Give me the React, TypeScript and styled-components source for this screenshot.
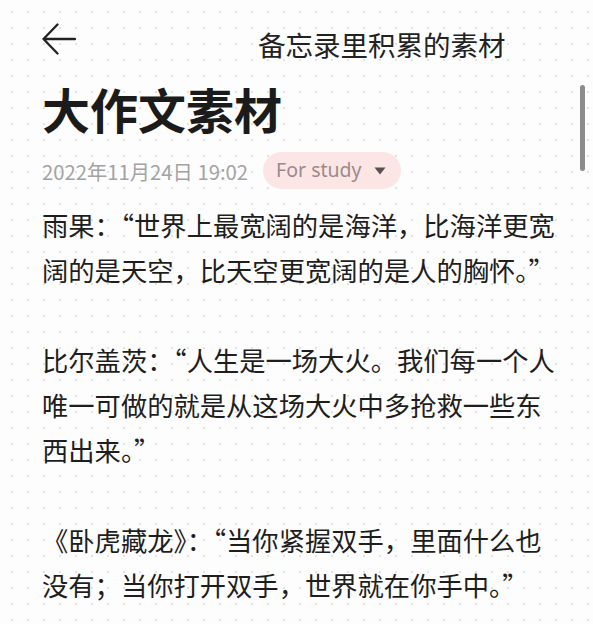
import styled, { createGlobalStyle } from 'styled-components';

const GlobalStyle = createGlobalStyle`
  html, body {
    margin: 0;
    padding: 0;
    overflow: hidden;
  }
  body {
    font-family: "Noto Sans CJK SC", "Noto Sans", sans-serif;
    background: #fdfdfd;
  }
`;

const quotes = [
  '雨果：“世界上最宽阔的是海洋，比海洋更宽阔的是天空，比天空更宽阔的是人的胸怀。”',
  '比尔盖茨：“人生是一场大火。我们每一个人唯一可做的就是从这场大火中多抢救一些东西出来。”',
  '《卧虎藏龙》：“当你紧握双手，里面什么也没有；当你打开双手，世界就在你手中。”',
];

const BackIcon = () => (
  <svg width="34" height="32" viewBox="0 0 34 32" fill="none">
    <path
      d="M1.5 16H33M15.5 1.5L1.5 16L15.5 30.5"
      stroke="#222"
      strokeWidth="2.3"
      strokeLinecap="round"
      strokeLinejoin="round"
    />
  </svg>
);

const Caret = () => (
  <svg width="12" height="8" viewBox="0 0 12 8">
    <path d="M0.5 0.5H11.5L6 7.5Z" fill="#5b4f50" />
  </svg>
);

export default function App() {
  return (
    <>
      <GlobalStyle />
      <Page>
        <Header>
          <BackButton>
            <BackIcon />
          </BackButton>
          <HeaderTitle>备忘录里积累的素材</HeaderTitle>
        </Header>

        <Title>大作文素材</Title>

        <MetaRow>
          <DateText>2022年11月24日 19:02</DateText>
          <Tag>
            <span>For study</span>
            <Caret />
          </Tag>
        </MetaRow>

        <Body>
          {quotes.map((q, i) => (
            <Paragraph key={i}>{q}</Paragraph>
          ))}
        </Body>

        <ScrollThumb />
      </Page>
    </>
  );
}

const Page = styled.div`
  position: relative;
  width: 593px;
  height: 624px;
  box-sizing: border-box;
  padding: 22px 33px 0 42px;
  background-color: #fdfdfd;
  background-image: radial-gradient(circle, #e2e2e2 1px, transparent 1.5px);
  background-size: 16px 16px;
  background-position: 4px 4px;
  overflow: hidden;
`;

const Header = styled.div`
  display: flex;
  align-items: center;
  height: 34px;
`;

const BackButton = styled.div`
  display: flex;
  width: 34px;
  height: 32px;
  cursor: pointer;
`;

const HeaderTitle = styled.div`
  margin-left: 182px;
  margin-top: 10px;
  font-size: 27.5px;
  line-height: 34px;
  color: #222;
  white-space: nowrap;
`;

const Title = styled.h1`
  margin: 28px 0 0;
  font-size: 48px;
  line-height: 48px;
  font-weight: 700;
  color: #1b1b1b;
`;

const MetaRow = styled.div`
  display: flex;
  align-items: center;
  gap: 15px;
  margin-top: 20px;
  height: 37px;
`;

const DateText = styled.span`
  font-size: 20.3px;
  color: #a3a3a3;
  white-space: nowrap;
`;

const Tag = styled.div`
  display: flex;
  align-items: center;
  gap: 12px;
  height: 37px;
  padding: 0 15px 0 13px;
  border-radius: 19px;
  background: #fce5e5;
  color: #9a8a8b;
  font-family: "Noto Sans", "Noto Sans CJK SC", sans-serif;
  font-size: 19.5px;

  span {
    line-height: 1;
    margin-top: -1px;
  }
`;

const Body = styled.div`
  margin-top: 13px;
  display: flex;
  flex-direction: column;
  gap: 45px;
`;

const Paragraph = styled.p`
  margin: 0;
  font-size: 26.3px;
  line-height: 45px;
  color: #1e1e1e;
`;

const ScrollThumb = styled.div`
  position: absolute;
  top: 85px;
  left: 580px;
  width: 5px;
  height: 86px;
  border-radius: 3px;
  background: #8c8c8c;
`;
